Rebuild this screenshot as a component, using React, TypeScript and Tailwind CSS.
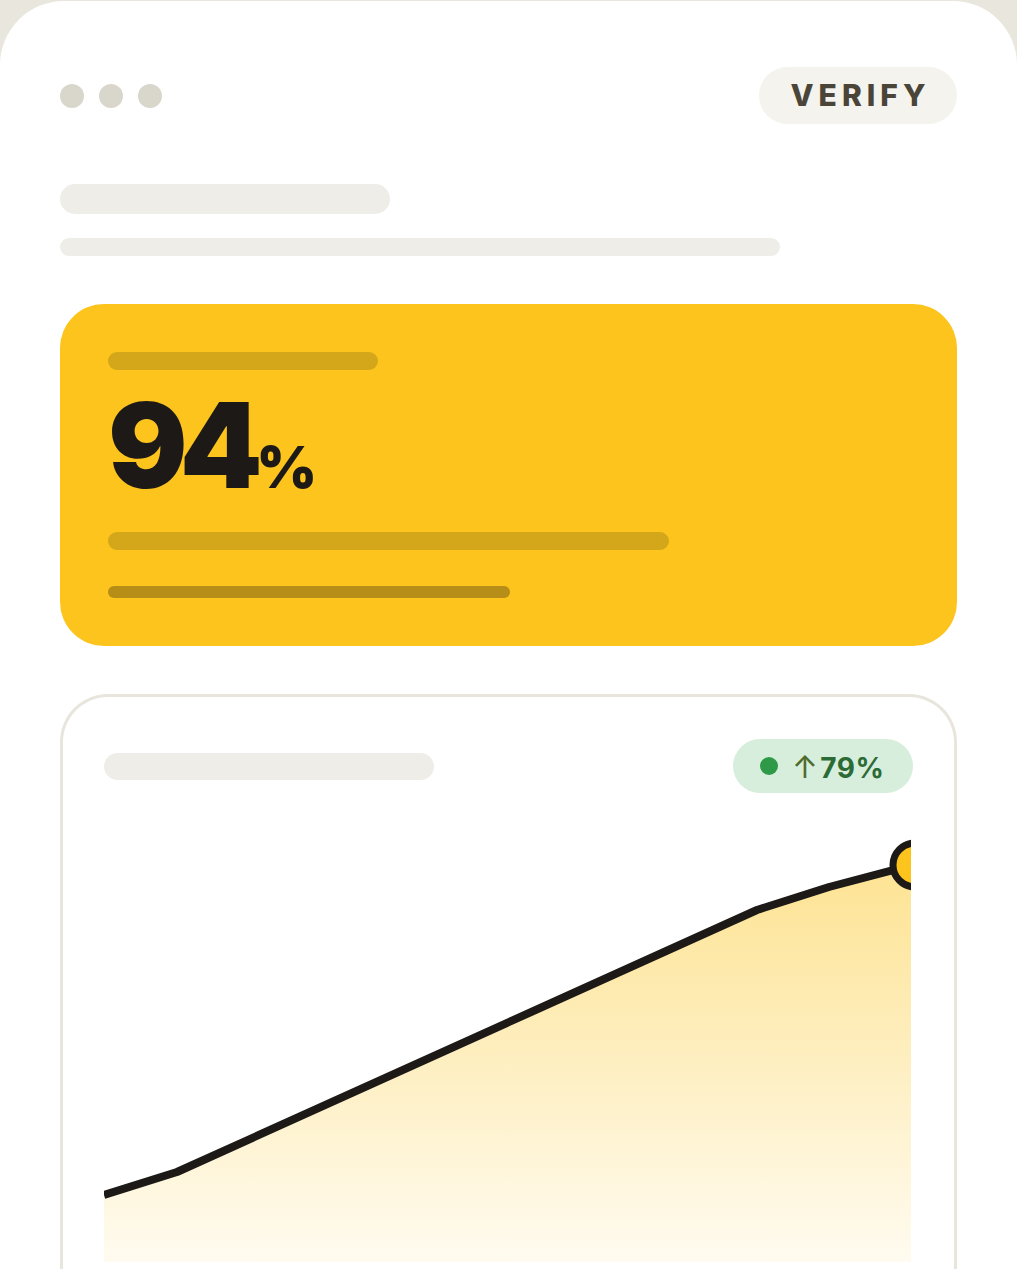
export default function App() {
	const line = "M0 363 L73 340 L653 78 L725 55 L808 33";
	const area = `${line} L807 33 L807 430 L0 430 Z`;

	return (
		<div className="min-h-[1269px] bg-[#e9e6dd] pt-[1px] overflow-hidden">
			<main
				className="min-h-[1268px] bg-white rounded-t-[64px] px-[60px] pt-[66px] flex flex-col"
				style={{ fontFamily: "Inter, 'Noto Sans', sans-serif" }}
			>
				{/* Top bar */}
				<header className="flex items-center justify-between h-[57px]">
					<div className="flex items-center gap-[15px]">
						<span className="w-6 h-6 rounded-full bg-[#d9d6cb]" />
						<span className="w-6 h-6 rounded-full bg-[#d9d6cb]" />
						<span className="w-6 h-6 rounded-full bg-[#d9d6cb]" />
					</div>
					<div className="h-[57px] w-[198px] rounded-full bg-[#f4f3ee] flex items-center justify-center">
						<span className="text-[30px] font-extrabold tracking-[5px] text-[#4a4538] pl-[5px]">VERIFY</span>
					</div>
				</header>

				{/* Title skeleton */}
				<span className="mt-[60px] w-[330px] h-[30px] rounded-full bg-[#eeede8]" />
				<span className="mt-6 w-[720px] h-[18px] rounded-full bg-[#eeede8]" />

				{/* Score card */}
				<section className="mt-12 rounded-[44px] bg-[#fcc41c] px-12 pt-12 pb-12 flex flex-col">
					<span className="w-[270px] h-[18px] rounded-full bg-[#d4a61a]" />
					<div className="mt-[14px] flex items-baseline text-[#1c1917] leading-none h-[148px] pt-[2px]">
						<span className="text-[118px] font-black tracking-[-8px]">94</span>
						<span className="text-[58px] font-black tracking-[-3px] ml-[2px]">%</span>
					</div>
					<span className="w-[561px] h-[18px] rounded-full bg-[#d4a61a]" />
					<span className="mt-9 w-[402px] h-3 rounded-full bg-[#b68d16]" />
				</section>

				{/* Chart card */}
				<section className="mt-12 rounded-t-[48px] border-[3px] border-b-0 border-[#e8e5dc] px-[41px] pt-[42px] flex-1 flex flex-col">
					<div className="flex items-center justify-between h-[54px]">
						<span className="w-[330px] h-[27px] rounded-full bg-[#eeede8]" />
						<div className="h-[54px] w-[180px] rounded-full bg-[#d8eedc] flex items-center pl-[27px] gap-[14px]">
							<span className="w-[18px] h-[18px] rounded-full bg-[#2e9a48]" />
							<span className="text-[28px] font-bold text-[#2a6b36] leading-none tracking-[0.5px]">
								<span className="font-normal text-[31px] text-[#4f6b2c] mr-[2px]">↑</span>79%
							</span>
						</div>
					</div>
					<svg className="mt-[39px] block" width="807" height="430" viewBox="0 0 807 430">
						<defs>
							<linearGradient id="fillGrad" x1="0" y1="0" x2="0" y2="1">
								<stop offset="0%" stopColor="#fde393" />
								<stop offset="100%" stopColor="#fffbf0" />
							</linearGradient>
						</defs>
						<path d={area} fill="url(#fillGrad)" />
						<path d={line} fill="none" stroke="#1c1917" strokeWidth="8" strokeLinejoin="round" />
						<circle cx="811" cy="33" r="22" fill="#fcc41c" stroke="#1c1917" strokeWidth="7" />
					</svg>
				</section>
			</main>
		</div>
	);
}
